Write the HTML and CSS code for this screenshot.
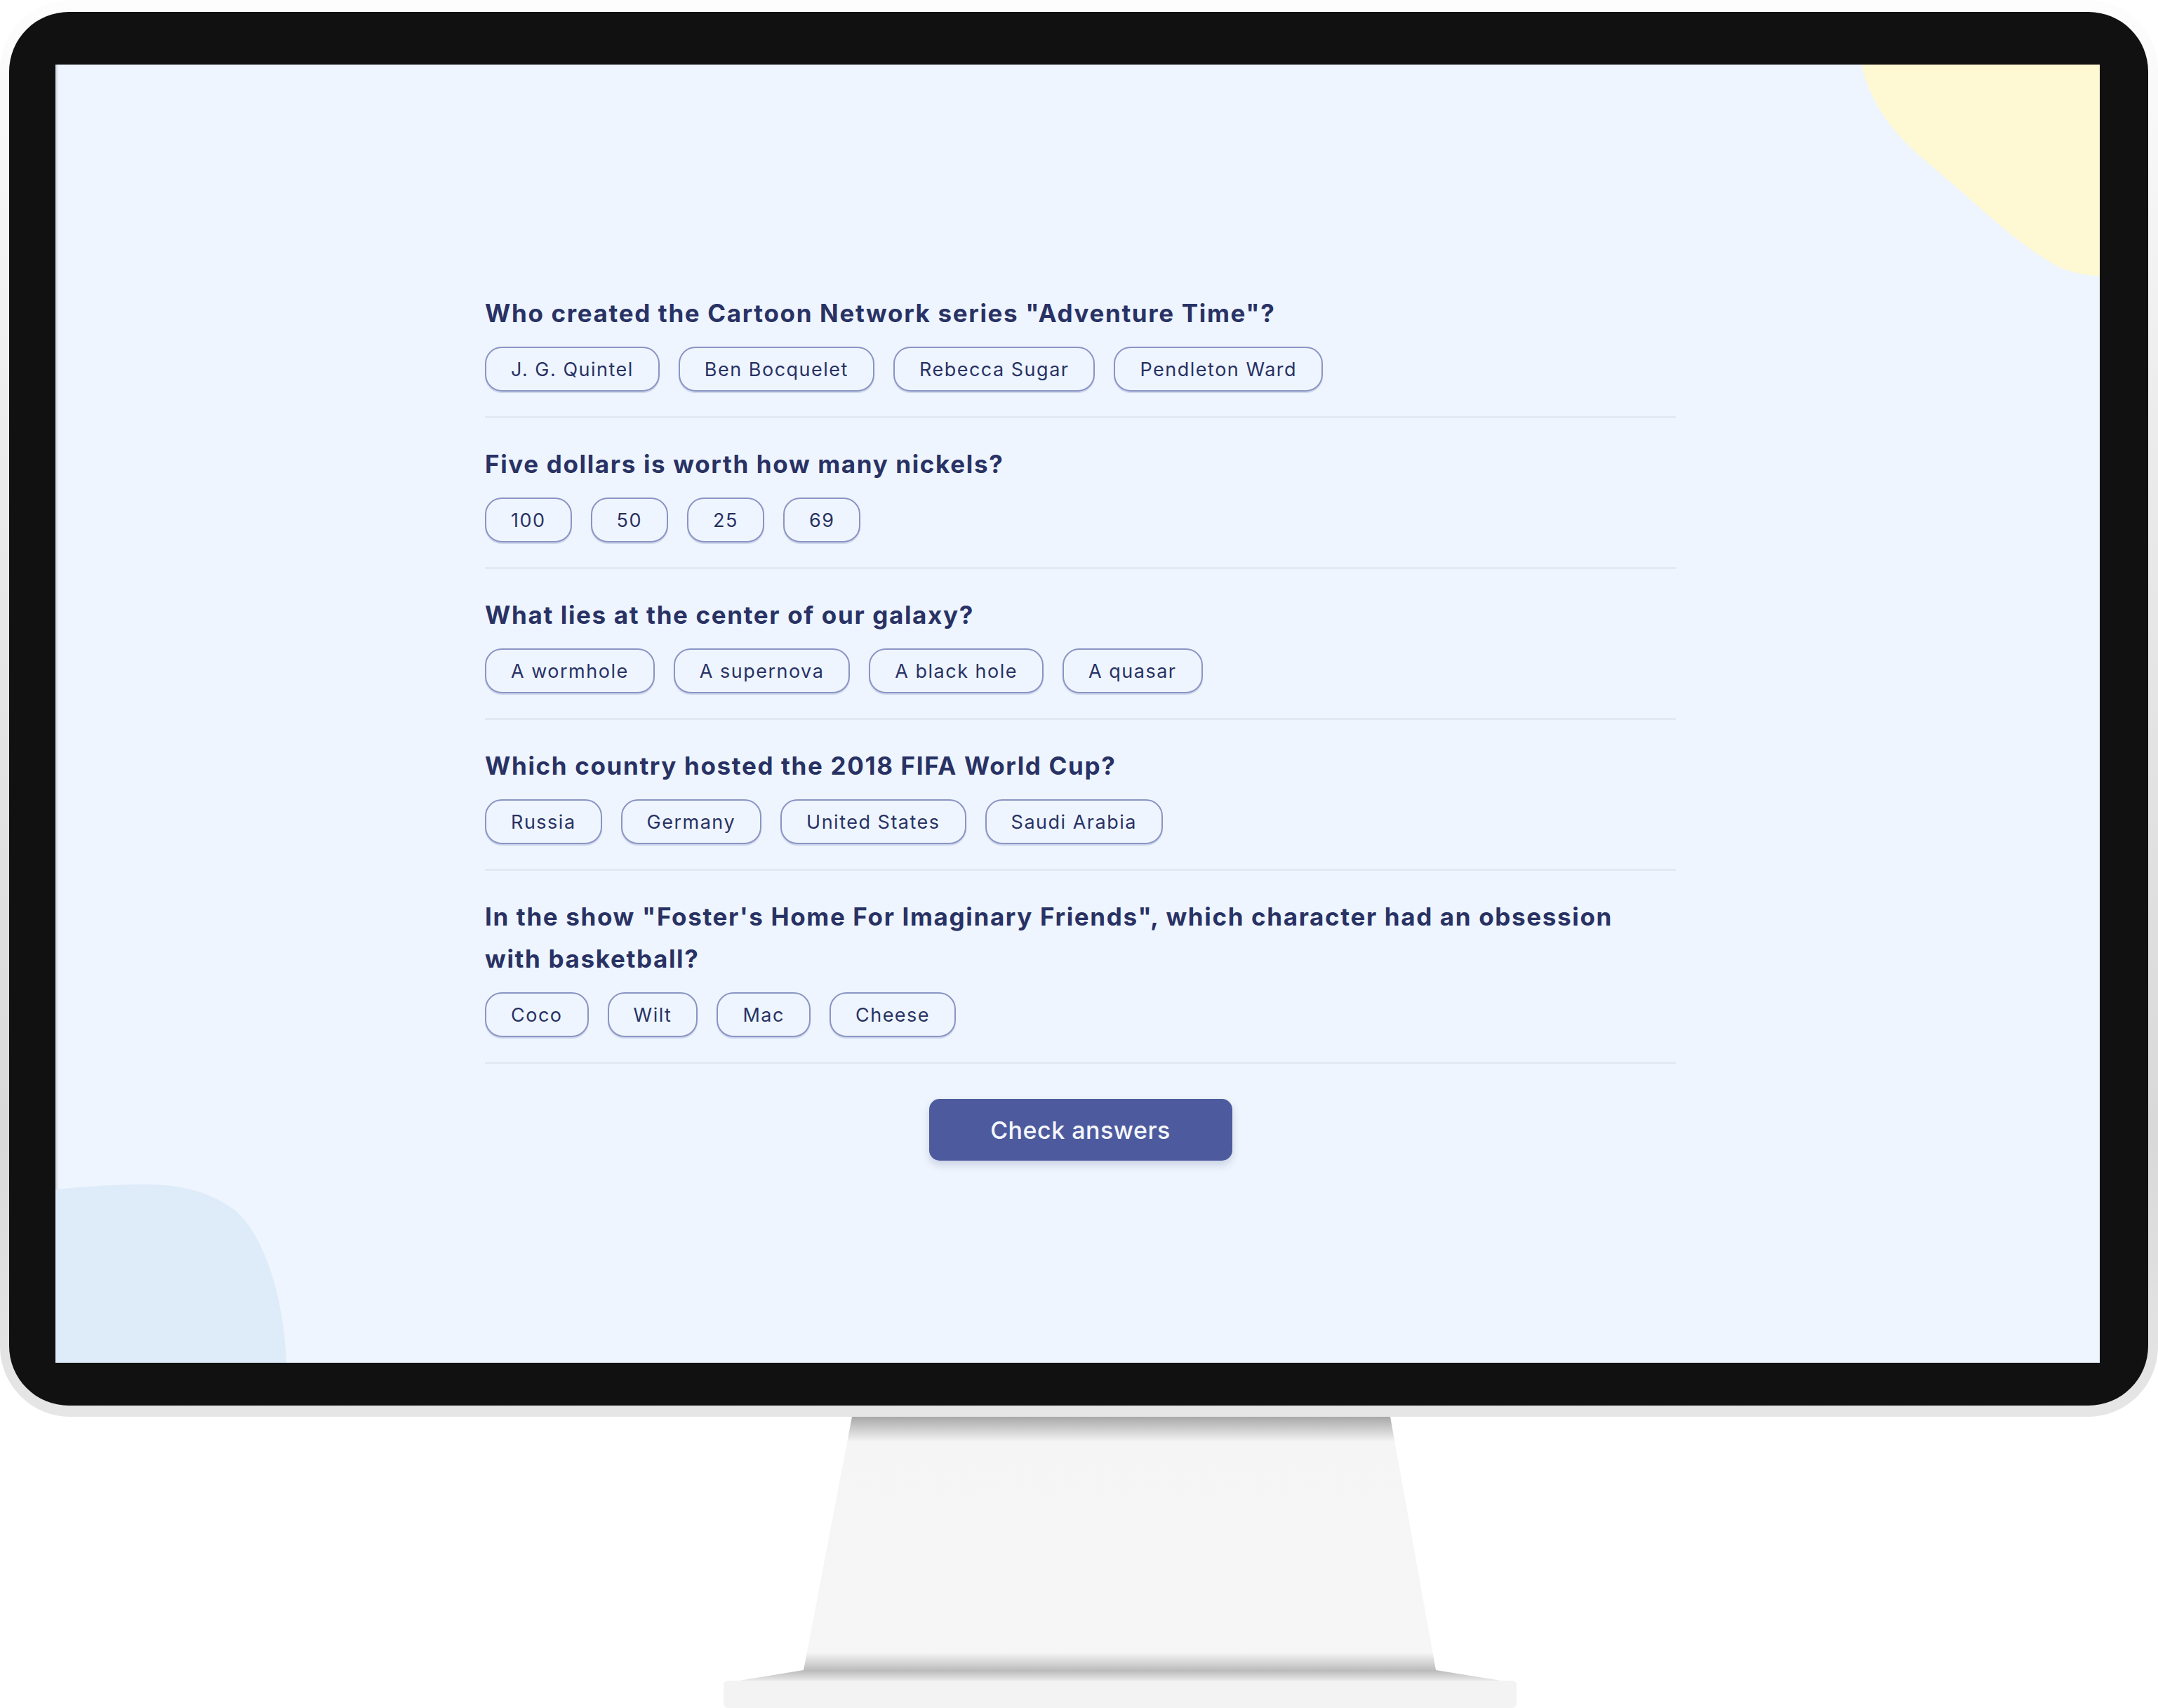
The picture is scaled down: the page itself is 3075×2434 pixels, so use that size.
FILE: index.html
```html
<!DOCTYPE html>
<html lang="en">
<head>
<meta charset="utf-8">
<title>Quizzical</title>
<link rel="stylesheet" href="styles.css">
</head>
<body>
<div class="monitor">
  <div class="shell">
    <div class="bezel">
      <main class="screen">
        <svg class="blob blob-yellow" width="345" height="305" viewBox="0 0 345 305" aria-hidden="true">
          <path d="M6,0 C14,45 45,95 100,140 C170,198 230,260 290,290 C310,298 330,301 345,301 L345,0 Z" fill="#fef8d3"/>
        </svg>
        <svg class="blob blob-blue" width="335" height="260" viewBox="0 0 335 260" aria-hidden="true">
          <path d="M0,13 C50,8 100,5 140,6 C190,8 225,20 255,42 C295,75 325,160 329,260 L0,260 Z" fill="#deebf8"/>
        </svg>
        <form class="quiz">
          <section class="item">
            <h2 class="question">Who created the Cartoon Network series "Adventure Time"?</h2>
            <div class="answers">
              <button type="button" class="answer">J. G. Quintel</button>
              <button type="button" class="answer">Ben Bocquelet</button>
              <button type="button" class="answer">Rebecca Sugar</button>
              <button type="button" class="answer">Pendleton Ward</button>
            </div>
          </section>
          <section class="item">
            <h2 class="question">Five dollars is worth how many nickels?</h2>
            <div class="answers">
              <button type="button" class="answer">100</button>
              <button type="button" class="answer">50</button>
              <button type="button" class="answer">25</button>
              <button type="button" class="answer">69</button>
            </div>
          </section>
          <section class="item">
            <h2 class="question">What lies at the center of our galaxy?</h2>
            <div class="answers">
              <button type="button" class="answer">A wormhole</button>
              <button type="button" class="answer">A supernova</button>
              <button type="button" class="answer">A black hole</button>
              <button type="button" class="answer">A quasar</button>
            </div>
          </section>
          <section class="item">
            <h2 class="question">Which country hosted the 2018 FIFA World Cup?</h2>
            <div class="answers">
              <button type="button" class="answer">Russia</button>
              <button type="button" class="answer">Germany</button>
              <button type="button" class="answer">United States</button>
              <button type="button" class="answer">Saudi Arabia</button>
            </div>
          </section>
          <section class="item">
            <h2 class="question">In the show "Foster's Home For Imaginary Friends", which character had an obsession with basketball?</h2>
            <div class="answers">
              <button type="button" class="answer">Coco</button>
              <button type="button" class="answer">Wilt</button>
              <button type="button" class="answer">Mac</button>
              <button type="button" class="answer">Cheese</button>
            </div>
          </section>
          <div class="actions">
            <button type="button" class="check">Check answers</button>
          </div>
        </form>
      </main>
    </div>
  </div>
  <div class="stand">
    <svg width="1130" height="415" viewBox="0 0 1130 415" aria-hidden="true">
      <defs>
        <linearGradient id="neckShade" x1="0" y1="0" x2="0" y2="1">
          <stop offset="0" stop-color="#a8a8a8"/>
          <stop offset="0.1" stop-color="#f5f5f5"/>
          <stop offset="0.93" stop-color="#f6f6f6"/>
          <stop offset="1" stop-color="#bdbdbd"/>
        </linearGradient>
        <linearGradient id="flareShade" x1="0" y1="0" x2="0" y2="1">
          <stop offset="0" stop-color="#b9b9b9"/>
          <stop offset="1" stop-color="#efefef"/>
        </linearGradient>
      </defs>
      <polygon points="183,0 950,0 1015,361 114,361" fill="url(#neckShade)"/>
      <polygon points="114,361 1015,361 1120,378 10,378" fill="url(#flareShade)"/>
      <rect x="0" y="376" width="1130" height="39" rx="6" fill="#f4f3f4"/>
    </svg>
  </div>
</div>
</body>
</html>
```
FILE: styles.css
```css
* {
  box-sizing: border-box;
}

html, body {
  margin: 0;
  padding: 0;
  background: #ffffff;
}

body {
  width: 3075px;
  height: 2434px;
  overflow: hidden;
  font-family: "Inter", "Noto Sans", sans-serif;
}

.monitor {
  width: 3075px;
}

.shell {
  height: 2019px;
  padding: 17px 14px 16px 13px;
  border-radius: 100px;
  background: linear-gradient(to bottom, #fdfdfd 0%, #ececec 30%, #d9d9d9 80%, #e6e6e6 100%);
}

.bezel {
  height: 1986px;
  padding: 75px 69px 61px 66px;
  border-radius: 85px;
  background: #111111;
}

.screen {
  position: relative;
  width: 2913px;
  height: 1850px;
  overflow: hidden;
  background: #eef5fe;
  box-shadow: inset 3px 0 0 #d7dde6;
  padding: 324px 0 0 8px;
}

.blob {
  position: absolute;
  display: block;
}

.blob-yellow {
  top: 0;
  right: 0;
}

.blob-blue {
  left: 0;
  bottom: 0;
}

.quiz {
  position: relative;
  width: 1697px;
  margin: 0 auto;
}

.item {
  padding-bottom: 35px;
  margin-bottom: 35px;
  border-bottom: 3px solid #e3e9f3;
}

.question {
  margin: 0;
  font-family: "Inter", "Noto Sans", sans-serif;
  font-weight: 700;
  font-size: 35px;
  letter-spacing: 1.65px;
  line-height: 60px;
  color: #293264;
  padding-right: 60px;
}

.answers {
  display: flex;
  flex-wrap: wrap;
  gap: 27px;
  margin-top: 18px;
}

.answer {
  height: 64px;
  padding: 0 35px;
  border: 2px solid #8b94c4;
  border-radius: 24px;
  background: transparent;
  box-shadow: 0 2px 1px rgba(77, 91, 158, 0.22);
  font-family: "Inter", "Noto Sans", sans-serif;
  font-weight: 400;
  font-size: 27px;
  letter-spacing: 1.5px;
  color: #293264;
  line-height: 1;
}

.actions {
  display: flex;
  justify-content: center;
  padding-top: 15px;
}

.check {
  width: 432px;
  height: 88px;
  border: none;
  border-radius: 15px;
  background: #4d5b9e;
  color: #f5f7fb;
  font-family: "Inter", "Noto Sans", sans-serif;
  font-weight: 500;
  font-size: 34px;
  letter-spacing: 0.5px;
  box-shadow: 0 6px 12px rgba(41, 50, 100, 0.18);
}

.stand {
  height: 415px;
  padding-left: 1031px;
}

.stand svg {
  display: block;
}
```
